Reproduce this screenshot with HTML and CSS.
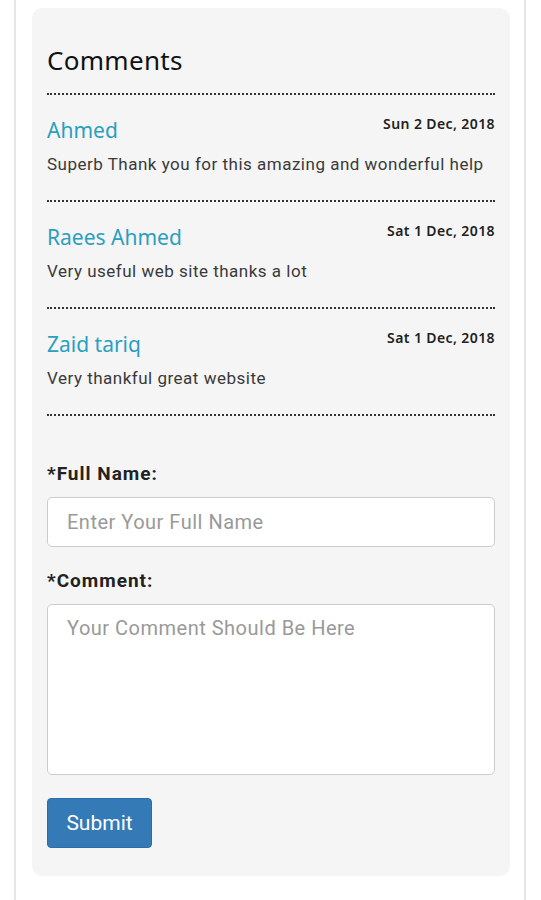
FILE: index.html
```html
<!DOCTYPE html>
<html>
<head>
<meta charset="utf-8">
<link rel="stylesheet" href="styles.css">
</head>
<body>
<div class="frame">
  <div class="card">
    <h2 class="title">Comments</h2>
    <div class="comment">
      <div class="comment-head">
        <span class="name">Ahmed</span>
        <span class="date">Sun 2 Dec, 2018</span>
      </div>
      <p class="text">Superb Thank you for this amazing and wonderful help</p>
    </div>
    <div class="comment">
      <div class="comment-head">
        <span class="name">Raees Ahmed</span>
        <span class="date">Sat 1 Dec, 2018</span>
      </div>
      <p class="text">Very useful web site thanks a lot</p>
    </div>
    <div class="comment">
      <div class="comment-head">
        <span class="name">Zaid tariq</span>
        <span class="date">Sat 1 Dec, 2018</span>
      </div>
      <p class="text">Very thankful great website</p>
    </div>
    <form class="form">
      <label class="label">*Full Name:</label>
      <input class="input" type="text" placeholder="Enter Your Full Name">
      <label class="label label-second">*Comment:</label>
      <textarea class="textarea" placeholder="Your Comment Should Be Here"></textarea>
      <button class="submit" type="button">Submit</button>
    </form>
  </div>
</div>
</body>
</html>
```
FILE: styles.css
```css
html, body {
  margin: 0;
  padding: 0;
  background: #ffffff;
}
.frame {
  margin-left: 14px;
  width: 512px;
  min-height: 900px;
  border-left: 2px solid #e6e6e6;
  border-right: 2px solid #e6e6e6;
  padding: 8px 14px 0 16px;
  box-sizing: border-box;
}
.card {
  background: #f5f5f5;
  border-radius: 10px;
  padding: 36px 15px 28px 15px;
}
.title {
  margin: 0;
  font-family: "Noto Sans", sans-serif;
  font-weight: 400;
  font-size: 26px;
  letter-spacing: 0.3px;
  line-height: 32px;
  color: #111;
  padding-bottom: 17px;
  border-bottom: 2px dotted #333;
}
.comment {
  padding: 22px 0 25px 0;
  border-bottom: 2px dotted #333;
}
.comment-head {
  display: flex;
  justify-content: space-between;
  align-items: flex-start;
}
.name {
  font-family: "Noto Sans", sans-serif;
  font-size: 21px;
  line-height: 26px;
  color: #2a9fbf;
}
.date {
  font-family: "Noto Sans", sans-serif;
  font-weight: 600;
  font-size: 14px;
  letter-spacing: 0.4px;
  line-height: 18px;
  margin-top: -2px;
  color: #222;
}
.text {
  margin: 10px 0 0 0;
  font-family: Roboto, sans-serif;
  font-size: 17px;
  letter-spacing: 0.5px;
  line-height: 22px;
  color: #3a3a3a;
}
.form {
  display: flex;
  flex-direction: column;
  align-items: flex-start;
  padding-top: 47px;
}
.label {
  font-family: Roboto, sans-serif;
  font-weight: 700;
  font-size: 19px;
  letter-spacing: 1px;
  line-height: 22px;
  color: #222;
}
.label-second {
  margin-top: 23px;
}
.input, .textarea {
  margin-top: 12px;
  width: 100%;
  box-sizing: border-box;
  border: 1px solid #cccccc;
  border-radius: 5px;
  background: #fff;
  font-family: Roboto, sans-serif;
  font-size: 20px;
  letter-spacing: 0.5px;
  color: #333;
  padding: 0 19px;
  outline: none;
}
.input {
  height: 50px;
}
.textarea {
  margin-top: 12px;
  height: 171px;
  padding-top: 11px;
  resize: none;
  line-height: 24px;
}
.input::placeholder, .textarea::placeholder {
  color: #999;
}
.submit {
  margin-top: 23px;
  width: 105px;
  height: 50px;
  background: #337ab7;
  border: 1px solid #2e6da4;
  border-radius: 4px;
  color: #fff;
  font-family: Roboto, sans-serif;
  font-size: 21px;
  padding: 0;
}
```
